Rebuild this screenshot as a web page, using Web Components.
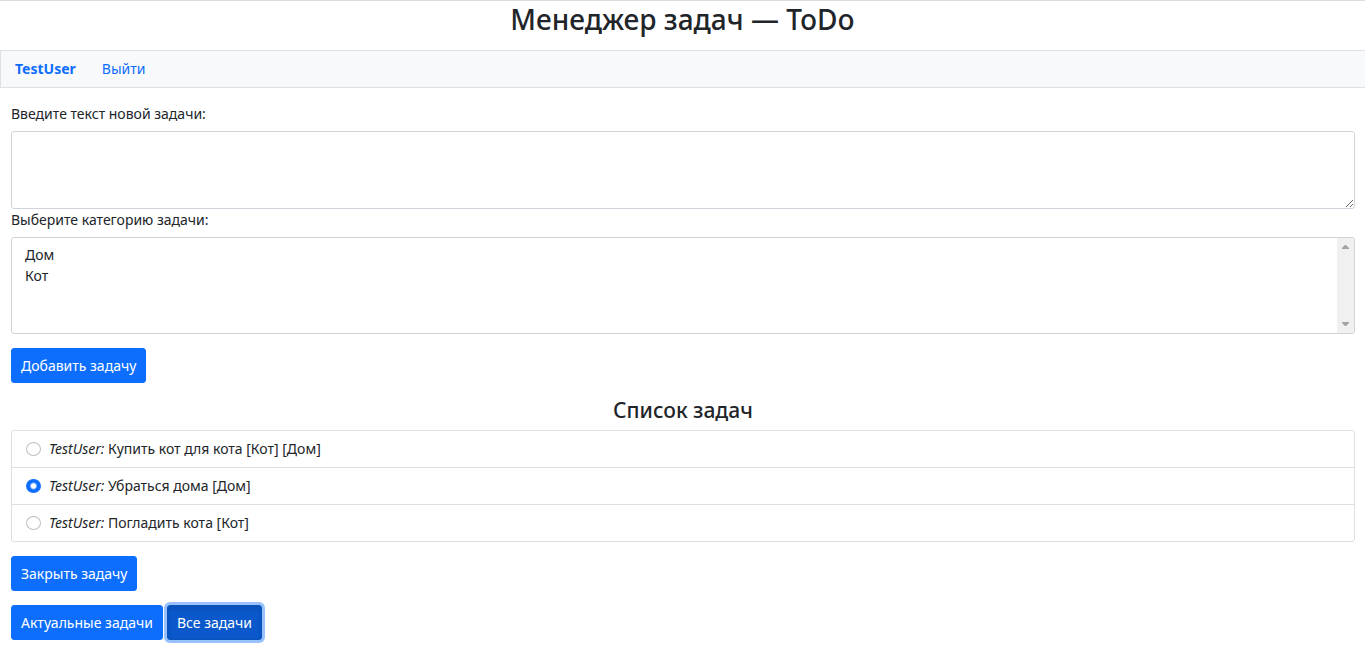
<!DOCTYPE html>
<html lang="ru">
<head>
<meta charset="utf-8">
<title>Менеджер задач — ToDo</title>
<style>
  body {
    margin: 0;
    background: #fff;
    color: #212529;
    font: 14px/21px "Noto Sans", "Open Sans", sans-serif;
  }
</style>
</head>
<body>
<todo-app></todo-app>

<script>
const define = (name, html, setup) => {
  const template = document.createElement('template');
  template.innerHTML = html;
  customElements.define(name, class extends HTMLElement {
    constructor() {
      super();
      this.attachShadow({ mode: 'open' }).append(template.content.cloneNode(true));
    }
    connectedCallback() {
      if (setup) setup(this, this.shadowRoot);
    }
  });
};

define('todo-button', `
  <style>
    :host { display: inline-block; }
    button {
      display: block; box-sizing: border-box; height: 35px; margin: 0;
      padding: 0 9px; border: 1px solid #0d6efd; border-radius: 3px;
      background: #0d6efd; color: #fff; font: inherit; white-space: nowrap; cursor: pointer;
    }
    :host([active]) button {
      background: #0a58ca; border-color: #0a53be;
      box-shadow: inset 0 3px 4px rgba(0, 0, 0, .1), 0 0 0 3px #98c1fe;
    }
  </style>
  <button type="button"><slot></slot></button>`);

define('todo-title', `
  <style>
    :host { display: block; border-top: 1px solid #dcdcdc; padding-bottom: 12px; }
    h1 { margin: 0; font-size: 28px; line-height: 37px; font-weight: 500; text-align: center; }
  </style>
  <h1><slot></slot></h1>`);

define('todo-nav', `
  <style>
    :host { display: block; background: #f8f9fa; border: 1px solid #dee2e6; border-right: 0; }
    nav { display: flex; gap: 26px; padding: 0 14px; line-height: 36px; }
    a { color: #0d6efd; text-decoration: none; }
    .user { font-weight: 700; }
  </style>
  <nav><a class="user" href="#user">TestUser</a><a href="#logout">Выйти</a></nav>`);

define('todo-form', `
  <style>
    :host { display: block; }
    form { display: flex; flex-direction: column; margin: 0; }
    label { margin-bottom: 7px; }
    textarea, select {
      box-sizing: border-box; width: 100%; margin: 0; border: 1px solid #ced4da;
      border-radius: 3px; background: #fff; color: inherit; font: inherit; outline: 0;
    }
    textarea { height: 78px; padding: 5px 11px; resize: vertical; }
    select { display: block; height: 97px; padding: 7px 28px 5px 11px; scrollbar-width: none; }
    option { padding: 0 2px 1px; min-height: 20px; line-height: 20px; }
    .list { position: relative; }
    .bar {
      position: absolute; inset: 1px 1px 1px auto; width: 17px; box-sizing: border-box;
      display: flex; flex-direction: column; align-items: center; justify-content: space-between;
      padding: 7px 0; background: #f0f0f0; border-radius: 0 2px 2px 0; pointer-events: none;
    }
    .bar svg { display: block; width: 7px; height: 4px; fill: #a3a3a3; }
    todo-button { align-self: flex-start; margin-top: 14px; }
  </style>
  <form>
    <label for="text">Введите текст новой задачи:</label>
    <textarea id="text"></textarea>
    <label for="category">Выберите категорию задачи:</label>
    <div class="list">
      <select id="category" multiple size="4"><option>Дом</option><option>Кот</option></select>
      <div class="bar" aria-hidden="true">
        <svg viewBox="0 0 7 4"><path d="M0 4V3L3 0H4L7 3V4Z"/></svg>
        <svg viewBox="0 0 7 4"><path d="M0 0V1L3 4H4L7 1V0Z"/></svg>
      </div>
    </div>
    <todo-button>Добавить задачу</todo-button>
  </form>`);

define('todo-list', `
  <style>
    :host { display: block; }
    h2 { margin: 0 0 7px; font-size: 21px; line-height: 26px; font-weight: 500; text-align: center; }
    ul { margin: 0; padding: 0; list-style: none; border: 1px solid #dfdfdf; border-radius: 3px; }
    li + li { border-top: 1px solid #dfdfdf; }
    label { display: flex; align-items: center; gap: 8px; padding: 0 14px; line-height: 36px; }
    input {
      appearance: none; flex: none; box-sizing: border-box; width: 15px; height: 14px; margin: 0;
      border: 1px solid #bfbfbf; border-radius: 50%; background: #fff;
    }
    input:checked { border-color: #0d6efd; background: radial-gradient(circle, #fff 2px, #0d6efd 4px); background-origin: border-box; }
  </style>
  <h2>Список задач</h2>
  <ul></ul>`, (host, root) => {
    const tasks = [
      ['Купить кот для кота [Кот] [Дом]', false],
      ['Убраться дома [Дом]', true],
      ['Погладить кота [Кот]', false]
    ];
    root.querySelector('ul').innerHTML = tasks.map(([text, checked]) =>
      `<li><label><input type="radio" name="task"${checked ? ' checked' : ''}><span><i>TestUser:</i> ${text}</span></label></li>`
    ).join('');
  });

define('todo-app', `
  <style>
    :host { display: block; }
    main { display: grid; gap: 14px; padding: 15px 10px 11px 11px; }
    .row { display: flex; gap: 4px; }
  </style>
  <header>
    <todo-title>Менеджер задач — ToDo</todo-title>
    <todo-nav></todo-nav>
  </header>
  <main>
    <todo-form></todo-form>
    <todo-list></todo-list>
    <div class="row"><todo-button>Закрыть задачу</todo-button></div>
    <div class="row"><todo-button>Актуальные задачи</todo-button><todo-button active>Все задачи</todo-button></div>
  </main>`);
</script>
</body>
</html>
